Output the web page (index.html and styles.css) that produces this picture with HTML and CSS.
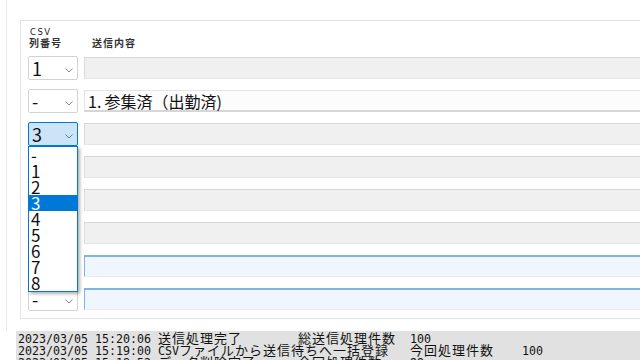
FILE: index.html
```html
<!DOCTYPE html>
<html lang="ja">
<head>
    <meta charset="UTF-8">
    <title>送信設定</title>
<link rel="stylesheet" href="styles.css">
</head>
<body>
	<div class="frame">
		<div class="panel">
			<div class="csv">CSV</div>
			<div class="heads"><span class="head-no">列番号</span><span>送信内容</span></div>
			<div class="rows">
				<div class="row">
					<div class="sel"><span>1</span><svg class="chev" width="8" height="5" viewBox="0 0 8 5"><path d="M0.5 0.5L4 4L7.5 0.5" fill="none" stroke="#8a8a8a"/></svg></div>
					<div class="field off"></div>
				</div>
				<div class="row">
					<div class="sel"><span>-</span><svg class="chev" width="8" height="5" viewBox="0 0 8 5"><path d="M0.5 0.5L4 4L7.5 0.5" fill="none" stroke="#8a8a8a"/></svg></div>
					<div class="field on">1.&thinsp;参集済（出勤済)</div>
				</div>
				<div class="row">
					<div class="sel focus"><span>3</span><svg class="chev" width="8" height="5" viewBox="0 0 8 5"><path d="M0.5 0.5L4 4L7.5 0.5" fill="none" stroke="#6a7f90"/></svg></div>
					<div class="field off"></div>
				</div>
				<!-- 4〜7行目の選択欄はドロップダウンの下に隠れる -->
				<div class="row">
					<div class="sel"></div>
					<div class="field off"></div>
				</div>
				<div class="row">
					<div class="sel"></div>
					<div class="field off"></div>
				</div>
				<div class="row">
					<div class="sel"></div>
					<div class="field off"></div>
				</div>
				<div class="row">
					<div class="sel"></div>
					<div class="field blue"></div>
				</div>
				<div class="row">
					<div class="sel"><span>-</span><svg class="chev" width="8" height="5" viewBox="0 0 8 5"><path d="M0.5 0.5L4 4L7.5 0.5" fill="none" stroke="#8a8a8a"/></svg></div>
					<div class="field blue"></div>
				</div>
			</div>
			<ul class="drop">
				<li>-</li>
				<li>1</li>
				<li>2</li>
				<li class="hit">3</li>
				<li>4</li>
				<li>5</li>
				<li>6</li>
				<li>7</li>
				<li>8</li>
			</ul>
		</div>
	</div>
	<div class="log">
<div class="ln">2023/03/05 15:20:06 <span class="j">送信処理完了</span>        <span class="j">総送信処理件数</span>  100</div>
<div class="ln">2023/03/05 15:19:00 CSV<span class="j">ファイルから送信待ちへ一括登録</span>   <span class="j">今回処理件数</span>    100</div>
<div class="ln">2023/03/05 15:18:52 <span class="j">データ削除完了</span>      <span class="j">今回処理件数</span>    99</div>
	</div>
</body>
</html>
```
FILE: styles.css
```css
*{padding:0;margin:0;list-style:none;box-sizing:border-box;}
body{
	width:640px;
	height:360px;
	overflow:hidden;
	background:#fff;
	color:#000;
	font-family:"Noto Sans CJK JP",sans-serif;
}
.frame{
	margin-left:6px;
	height:331px;
	border-left:1px solid #ebebeb;
	padding:20px 0 0 13px;
}
.panel{
	position:relative;
	width:660px;
	border:1px solid #e3e3e3;
	border-right:none;
	padding:6px 0 7px 7px;
}
.csv{
	height:10px;
	font-family:"DejaVu Sans",sans-serif;
	font-size:8.5px;
	line-height:11px;
	letter-spacing:1.5px;
	padding-left:2px;
	color:#222;
}
.heads{
	height:12px;
	font-size:10px;
	line-height:12px;
	letter-spacing:1px;
	font-weight:bold;
	color:#333;
	display:flex;
	margin-bottom:7px;
}
.head-no{width:64px;padding-left:1px;}
.rows{
	display:flex;
	flex-direction:column;
	gap:9px;
}
.row{
	height:24px;
	display:flex;
	align-items:center;
}
.sel{
	width:50px;
	height:24px;
	border:1px solid #d3d3d3;
	border-radius:2px;
	background:#fff;
	display:flex;
	align-items:center;
	padding-left:3px;
	font-family:"Liberation Sans Narrow","Noto Sans CJK JP",sans-serif;
	font-size:18px;
	line-height:22px;
	color:#111;
}
.sel.focus{
	background:#cce4f7;
	border-color:#0078d7;
}
.chev{
	margin-left:auto;
	margin-right:4px;
	margin-top:4px;
}
.field{
	flex:1;
	height:22px;
	margin-left:6px;
	font-size:16px;
	line-height:21px;
	padding-left:3px;
	white-space:nowrap;
	color:#111;
}
.field.off{
	background:#f0f0f0;
	border:1px solid #e6e6e6;
	border-top-color:#d8d8d8;
	border-left-color:#dadada;
}
.field.on{
	background:#fcfcfc;
	border:1px solid #e4e4e4;
	border-bottom:2px solid #d6d6d6;
}
.field.blue{
	background:#eff6fd;
	border-top:2px solid #7cb4e6;
	border-left:1px solid #7cb4e6;
	border-bottom:1px solid #e4eef8;
}
.drop{
	position:absolute;
	left:7px;
	top:125px;
	width:50px;
	height:146px;
	border:1px solid #0078d7;
	background:#fff;
	box-shadow:2px 2px 3px rgba(0,0,0,.3);
	font-family:"Liberation Sans Narrow","Noto Sans CJK JP",sans-serif;
	font-size:17px;
	color:#111;
}
.drop li{
	height:16px;
	line-height:16px;
	padding-left:2px;
}
.drop li.hit{
	background:#0078d7;
	color:#fff;
}
.log{
	margin-left:16px;
	height:29px;
	background:#e1e1e1;
	padding:1px 0 0 2px;
	overflow:hidden;
	font-family:"DejaVu Sans Mono",monospace;
	font-size:11.63px;
	color:#111;
}
.ln{
	height:12px;
	line-height:12px;
	white-space:pre;
}
.ln .j{
	font-family:"Noto Sans CJK JP",sans-serif;
	font-size:13px;
	letter-spacing:1px;
}
```
